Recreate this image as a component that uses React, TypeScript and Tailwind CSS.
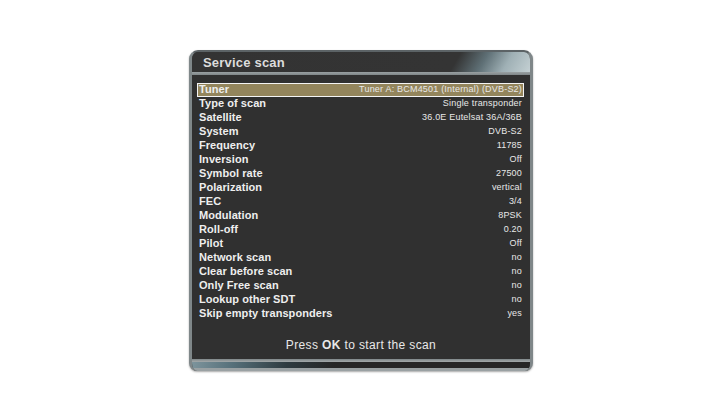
const rows: [string, string][] = [
  ["Tuner", "Tuner A: BCM4501 (Internal) (DVB-S2)"],
  ["Type of scan", "Single transponder"],
  ["Satellite", "36.0E Eutelsat 36A/36B"],
  ["System", "DVB-S2"],
  ["Frequency", "11785"],
  ["Inversion", "Off"],
  ["Symbol rate", "27500"],
  ["Polarization", "vertical"],
  ["FEC", "3/4"],
  ["Modulation", "8PSK"],
  ["Roll-off", "0.20"],
  ["Pilot", "Off"],
  ["Network scan", "no"],
  ["Clear before scan", "no"],
  ["Only Free scan", "no"],
  ["Lookup other SDT", "no"],
  ["Skip empty transponders", "yes"],
];

export default function App() {
  return (
    <div className="w-[720px] h-[405px] bg-white flex justify-center items-start pt-[50px] pl-[2px] font-['Liberation_Sans',sans-serif]">
      <div className="w-[344px] h-[321px] flex flex-col rounded-t-[9px] rounded-b-[8px] border-x-[3px] border-t-[2px] border-x-[#7f8789] border-t-[#5c6366] bg-[#303030] overflow-hidden shadow-[0_1px_2px_#a8a8a8]">
        <div className="h-[20px] shrink-0 flex items-center pl-[11px] pt-[2px] bg-[linear-gradient(120deg,#333333_0%,#343434_77%,#5f7076_85%,#9fb0b5_92%,#c4d0d3_100%)]">
          <span className="text-[13px] font-bold tracking-[0.2px] text-[#dcdcdc]">Service scan</span>
        </div>
        <div className="h-[3px] shrink-0 bg-[linear-gradient(#9aa1a3,#7f8688)]" />
        <div className="h-[8px] shrink-0" />
        <div className="flex flex-col pl-[5px] pr-[6px]">
          {rows.map(([label, value], i) => (
            <div
              key={label}
              className={
                i === 0
                  ? "h-[14px] flex items-center justify-between px-[1px] pb-[1px] bg-[#93855c] border border-[#f4f4f4]"
                  : "h-[14px] flex items-center justify-between px-[2px] pb-[2px]"
              }
            >
              <span className="text-[11px] font-bold tracking-[0.06px] text-[#eeeeee] leading-none">{label}</span>
              <span className="text-[9px] tracking-[0.2px] text-[#e8e8e8] leading-none">{value}</span>
            </div>
          ))}
        </div>
        <div className="h-[16px] shrink-0" />
        <div className="h-[16px] shrink-0 flex items-center justify-center">
          <span className="text-[12px] tracking-[0.37px] text-[#e8e8e8]">
            Press <b>OK</b> to start the scan
          </span>
        </div>
        <div className="flex-1" />
        <div className="h-[3px] shrink-0 bg-[linear-gradient(#7f8789,#a3a9aa)]" />
        <div className="h-[6px] shrink-0 bg-[linear-gradient(100deg,#7d949c_0%,#56707a_12%,#2e3b40_28%,#262626_42%,#262626_100%)]" />
        <div className="h-[3px] shrink-0 bg-[#9aa1a3]" />
      </div>
    </div>
  );
}
